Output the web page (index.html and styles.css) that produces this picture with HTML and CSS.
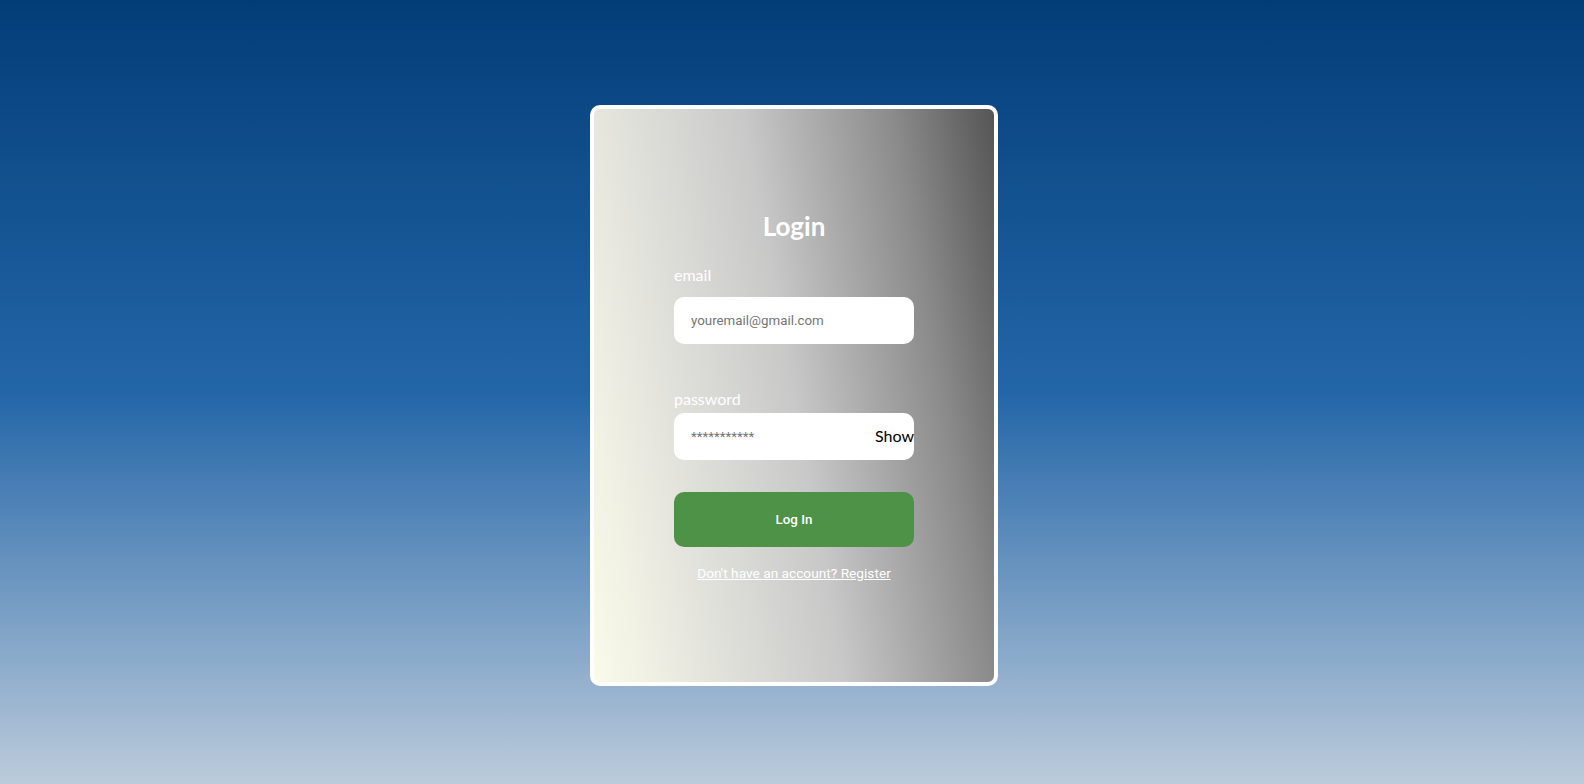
FILE: index.html
```html
<!DOCTYPE html>
<html lang="en">
<head>
<meta charset="utf-8">
<title>Login</title>
<link rel="stylesheet" href="styles.css">
</head>
<body>
<main class="page">
  <section class="card">
    <form class="login-form">
      <h1 class="title">Login</h1>
      <label class="field-label label-email" for="email">email</label>
      <input class="field-input" id="email" type="email" placeholder="youremail@gmail.com">
      <label class="field-label label-password" for="password">password</label>
      <div class="password-wrap">
        <input class="field-input" id="password" type="password" placeholder="***********">
        <span class="show-toggle">Show</span>
      </div>
      <button class="submit" type="button">Log In</button>
      <a class="register-link" href="#">Don't have an account? Register</a>
    </form>
  </section>
</main>
</body>
</html>
```

FILE: styles.css
```css
* {
  box-sizing: border-box;
}

html, body {
  margin: 0;
  padding: 0;
  height: 100%;
}

body {
  background: linear-gradient(to bottom, #033d78 0%, #2366a8 50%, #bccbdb 100%);
  font-family: "Lato", "Open Sans", sans-serif;
  overflow: hidden;
}

.page {
  height: 784px;
  display: flex;
  justify-content: center;
  align-items: flex-start;
  padding-top: 105px;
  padding-left: 4px;
}

.card {
  width: 408px;
  height: 581px;
  border: 4px solid #ffffff;
  border-radius: 10px;
  background: linear-gradient(80deg, #fbfbea 0%, #e2e2dc 25%, #c8c8c8 50%, #8a8a8a 80%, #555555 100%);
  display: flex;
  justify-content: center;
  align-items: center;
}

.login-form {
  width: 240px;
  display: flex;
  flex-direction: column;
}

.title {
  margin: 0 0 24px;
  font-family: "Lato", sans-serif;
  font-weight: 700;
  font-size: 26px;
  line-height: 30px;
  height: 30px;
  color: #ffffff;
  text-align: center;
}

.field-label {
  font-family: "Lato", sans-serif;
  font-size: 16px;
  line-height: 20px;
  height: 20px;
  color: #ffffff;
}

.label-email {
  margin-bottom: 12px;
}

.label-password {
  margin-top: 45px;
  margin-bottom: 4px;
}

.field-input {
  display: block;
  width: 240px;
  height: 47px;
  border: none;
  border-radius: 10px;
  background: #ffffff;
  padding: 0 17px;
  font-family: "Roboto", sans-serif;
  font-size: 13.333px;
  color: #333333;
  outline: none;
}

.field-input::placeholder {
  color: #757575;
}

.password-wrap {
  position: relative;
  width: 240px;
  height: 47px;
}

.show-toggle {
  position: absolute;
  right: 0;
  top: 50%;
  transform: translateY(-50%);
  font-family: "Lato", sans-serif;
  font-size: 16px;
  line-height: 20px;
  color: #000000;
}

.submit {
  margin-top: 32px;
  width: 240px;
  height: 55px;
  border: none;
  border-radius: 10px;
  background: #4e9248;
  color: #ffffff;
  font-family: "Roboto", sans-serif;
  font-weight: 500;
  font-size: 13.333px;
}

.register-link {
  margin-top: 18px;
  display: block;
  height: 16px;
  line-height: 16px;
  text-align: center;
  font-family: "Roboto", sans-serif;
  font-size: 13.7px;
  color: #ffffff;
  text-decoration: underline;
}
```
